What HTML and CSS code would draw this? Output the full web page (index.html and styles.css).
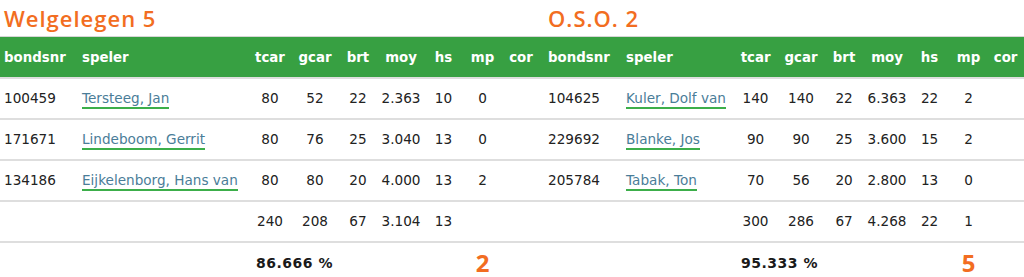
FILE: index.html
```html
<!DOCTYPE html>
<html lang="nl">
<head>
<meta charset="utf-8">
<title>Wedstrijd</title>
<link rel="stylesheet" href="styles.css">
</head>
<body>
<table class="match">
  <colgroup>
    <col class="c-bonds"><col class="c-speler"><col class="c-tcar"><col class="c-gcar"><col class="c-brt"><col class="c-moy"><col class="c-hs"><col class="c-mp"><col class="c-cor">
    <col class="c-bonds2"><col class="c-speler2"><col class="c-tcar2"><col class="c-gcar"><col class="c-brt"><col class="c-moy"><col class="c-hs"><col class="c-mp"><col class="c-cor2">
  </colgroup>
  <thead>
    <tr class="titles">
      <td colspan="9" class="team">Welgelegen 5</td>
      <td colspan="9" class="team team-right">O.S.O. 2</td>
    </tr>
    <tr class="head">
      <th class="l">bondsnr</th><th class="l">speler</th><th>tcar</th><th>gcar</th><th>brt</th><th>moy</th><th>hs</th><th>mp</th><th>cor</th>
      <th class="l l2">bondsnr</th><th class="l">speler</th><th>tcar</th><th>gcar</th><th>brt</th><th>moy</th><th>hs</th><th>mp</th><th>cor</th>
    </tr>
  </thead>
  <tbody>
    <tr>
      <td class="l">100459</td><td class="l"><a class="player" href="#">Tersteeg, Jan</a></td><td>80</td><td>52</td><td>22</td><td>2.363</td><td>10</td><td>0</td><td></td>
      <td class="l l2">104625</td><td class="l"><a class="player" href="#">Kuler, Dolf van</a></td><td>140</td><td>140</td><td>22</td><td>6.363</td><td>22</td><td>2</td><td></td>
    </tr>
    <tr>
      <td class="l">171671</td><td class="l"><a class="player" href="#">Lindeboom, Gerrit</a></td><td>80</td><td>76</td><td>25</td><td>3.040</td><td>13</td><td>0</td><td></td>
      <td class="l l2">229692</td><td class="l"><a class="player" href="#">Blanke, Jos</a></td><td>90</td><td>90</td><td>25</td><td>3.600</td><td>15</td><td>2</td><td></td>
    </tr>
    <tr>
      <td class="l">134186</td><td class="l"><a class="player" href="#">Eijkelenborg, Hans van</a></td><td>80</td><td>80</td><td>20</td><td>4.000</td><td>13</td><td>2</td><td></td>
      <td class="l l2">205784</td><td class="l"><a class="player" href="#">Tabak, Ton</a></td><td>70</td><td>56</td><td>20</td><td>2.800</td><td>13</td><td>0</td><td></td>
    </tr>
    <tr>
      <td></td><td></td><td>240</td><td>208</td><td>67</td><td>3.104</td><td>13</td><td></td><td></td>
      <td></td><td></td><td>300</td><td>286</td><td>67</td><td>4.268</td><td>22</td><td>1</td><td></td>
    </tr>
    <tr class="result">
      <td></td><td></td><td colspan="4" class="pct">86.666 %</td><td></td><td class="score">2</td><td></td>
      <td></td><td></td><td colspan="4" class="pct">95.333 %</td><td></td><td class="score">5</td><td></td>
    </tr>
  </tbody>
</table>
</body>
</html>
```

FILE: styles.css
```css
html, body {
  margin: 0;
  padding: 0;
  background: #ffffff;
}

body {
  font-family: "DejaVu Sans", Verdana, sans-serif;
  font-size: 13.33px;
  color: #222222;
}

.match {
  width: 1024px;
  table-layout: fixed;
  border-collapse: collapse;
}

.c-bonds { width: 78px; }
.c-speler { width: 169px; }
.c-tcar { width: 46px; }
.c-gcar { width: 44px; }
.c-brt { width: 42px; }
.c-moy { width: 44px; }
.c-hs { width: 41px; }
.c-mp { width: 37px; }
.c-cor { width: 40px; }
.c-bonds2 { width: 81px; }
.c-speler2 { width: 110px; }
.c-tcar2 { width: 47px; }
.c-cor2 { width: 37px; }

.match td,
.match th {
  padding: 0;
  height: 39px;
  text-align: center;
  vertical-align: middle;
  white-space: nowrap;
  border-top: 2px solid #dedede;
  line-height: 19px;
}

.match tbody td {
  font-size: 13.6px;
}

.match .l {
  text-align: left;
  padding-left: 4px;
}

.match .l2 {
  padding-left: 7px;
}

.titles td.team {
  border-top: none;
  height: 35px;
  padding: 0 0 1px 4px;
  text-align: left;
  vertical-align: middle;
  font-family: "Open Sans", "Noto Sans", sans-serif;
  font-weight: 600;
  font-size: 22px;
  letter-spacing: 1px;
  line-height: 26px;
  color: #f26d21;
}

.titles td.team-right {
  padding-left: 7px;
}

.head th {
  background: #37a042;
  color: #ffffff;
  font-weight: bold;
  border-top: 1px solid #d6d6d6;
  height: 40px;
}

.player {
  color: #4a7d98;
  text-decoration: none;
  border-bottom: 2px solid #3cae4a;
  padding-bottom: 1px;
}

.match .result td {
  height: 40px;
  vertical-align: middle;
}

.match .result td.pct {
  text-align: left;
  padding-left: 9px;
  font-weight: bold;
  font-size: 14px;
  letter-spacing: 0.5px;
  color: #1a1a1a;
}

.match .result td.score {
  font-family: "Open Sans", "Noto Sans", sans-serif;
  font-weight: 700;
  font-size: 24px;
  line-height: 26px;
  color: #f26d21;
}
```
